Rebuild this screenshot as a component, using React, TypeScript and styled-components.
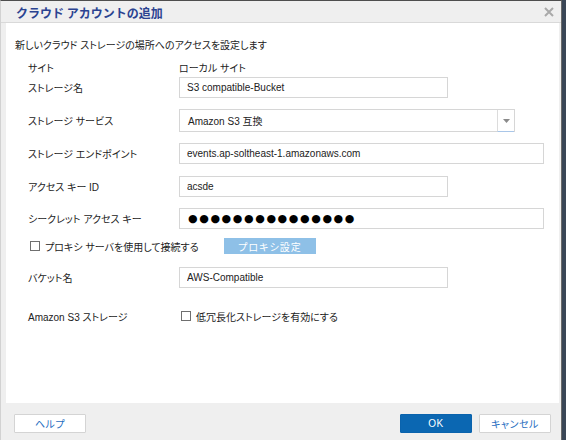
import React from "react";
import styled, { createGlobalStyle } from "styled-components";

const GlobalStyle = createGlobalStyle`
    html, body {
        margin: 0;
        padding: 0;
        background: #3a4656;
    }
    body {
        font-family: "Liberation Sans", "Noto Sans CJK JP", sans-serif;
        font-feature-settings: "palt" 1;
        font-size: 10px;
        color: #222;
    }
`;

const DialogDiv = styled.div`
    width: 562px;
    height: 440px;
    box-sizing: border-box;
    background: #efefef;
    border-top: 1px solid #4e4e4e;
    border-left: 1px solid #d2d2d2;
    border-right: 1px solid #6a6a6a;
    display: flex;
    flex-direction: column;
`;

const HeaderDiv = styled.div`
    height: 21px;
    border-bottom: 1px solid #d9d9d9;
    display: flex;
    align-items: center;
    justify-content: space-between;
    padding: 0 7px 0 15px;
`;

const TitleSpan = styled.span`
    font-family: "Noto Sans CJK JP", sans-serif;
    font-feature-settings: normal;
    font-weight: bold;
    font-size: 12px;
    color: #2b4391;
    padding-top: 1px;
`;

const CloseBtn = styled.div`
    width: 10px;
    height: 10px;
    display: flex;
    margin-top: 1px;
`;

const ContentDiv = styled.div`
    flex: 1;
    background: #fff;
    margin: 0 2px 0 5px;
    display: flex;
    flex-direction: column;
`;

const DescDiv = styled.div`
    margin-top: 16px;
    padding-left: 9px;
    height: 14px;
    line-height: 14px;
`;

const RowDiv = styled.div<{ $top: number; $h: number }>`
    margin-top: ${(p) => p.$top}px;
    height: ${(p) => p.$h}px;
    padding-left: 22px;
    display: flex;
    align-items: center;
`;

const LabelSpan = styled.span`
    width: 151px;
    flex-shrink: 0;
`;

const TextInput = styled.input<{ $w: number }>`
    width: ${(p) => p.$w}px;
    height: 100%;
    box-sizing: border-box;
    border: 1px solid #d6d6d6;
    padding: 0 0 0 7px;
    margin: 0;
    font-family: "Liberation Sans", "Noto Sans CJK JP", sans-serif;
    font-size: 10px;
    color: #222;
    background: #fff;
    outline: none;
`;

const SecretBox = styled.div<{ $w: number }>`
    width: ${(p) => p.$w}px;
    height: 100%;
    box-sizing: border-box;
    border: 1px solid #d6d6d6;
    padding-left: 8px;
    display: flex;
    align-items: center;
    font-family: "DejaVu Sans", sans-serif;
    font-size: 11px;
    letter-spacing: 1.6px;
    color: #000;
`;

const SelectBox = styled.div<{ $w: number }>`
    width: ${(p) => p.$w}px;
    height: 100%;
    box-sizing: border-box;
    border: 1px solid #d6d6d6;
    display: flex;
    align-items: stretch;
`;

const SelectValue = styled.div`
    flex: 1;
    display: flex;
    align-items: center;
    padding-left: 8px;
`;

const SelectArrow = styled.div`
    width: 16px;
    border-left: 1px solid #dcdcdc;
    border-bottom: 1px solid #a9c6e8;
    margin-bottom: -1px;
    display: flex;
    align-items: center;
    justify-content: center;
`;

const CheckGroup = styled.label<{ $w?: number }>`
    display: flex;
    align-items: center;
    gap: 5px;
    ${(p) => (p.$w ? `width: ${p.$w}px;` : "")}
    flex-shrink: 0;
`;

const CheckBox = styled.span<{ $ml: number }>`
    width: 10px;
    height: 10px;
    box-sizing: border-box;
    border: 1px solid #6f6f6f;
    background: #fff;
    margin-left: ${(p) => p.$ml}px;
    display: inline-block;
`;

const ProxyBtn = styled.div`
    width: 92px;
    height: 16px;
    background: #8ec0e7;
    color: #fff;
    display: flex;
    align-items: center;
    justify-content: center;
    letter-spacing: 1px;
    margin-left: -4px;
`;

const FooterDiv = styled.div`
    height: 37px;
    box-sizing: border-box;
    padding: 11px 10px 0 13px;
    display: flex;
    align-items: flex-start;
    gap: 7px;
`;

const FooterBtn = styled.div<{ $primary?: boolean }>`
    width: 72px;
    height: 19px;
    box-sizing: border-box;
    border: 1px solid ${(p) => (p.$primary ? "#0a63ad" : "#d4d4d4")};
    background: ${(p) => (p.$primary ? "#0b67b2" : "#fff")};
    color: ${(p) => (p.$primary ? "#fff" : "#1e6dbf")};
    border-radius: 1px;
    display: flex;
    align-items: center;
    justify-content: center;
    font-size: 10px;
    letter-spacing: 0.5px;
`;

const Spacer = styled.div`
    flex: 1;
`;

const App = () => {
    return (
        <>
            <GlobalStyle />
            <DialogDiv>
                <HeaderDiv>
                    <TitleSpan>クラウド アカウントの追加</TitleSpan>
                    <CloseBtn>
                        <svg width="10" height="10" viewBox="0 0 10 10">
                            <path d="M1 1 L9 9 M9 1 L1 9" stroke="#a9a9a9" strokeWidth="2" />
                        </svg>
                    </CloseBtn>
                </HeaderDiv>

                <ContentDiv>
                    <DescDiv>新しいクラウド ストレージの場所へのアクセスを設定します</DescDiv>

                    <RowDiv $top={7} $h={14}>
                        <LabelSpan>サイト</LabelSpan>
                        <span>ローカル サイト</span>
                    </RowDiv>

                    <RowDiv $top={3} $h={21}>
                        <LabelSpan>ストレージ名</LabelSpan>
                        <TextInput $w={269} readOnly value="S3 compatible-Bucket" />
                    </RowDiv>

                    <RowDiv $top={11} $h={23}>
                        <LabelSpan>ストレージ サービス</LabelSpan>
                        <SelectBox $w={336}>
                            <SelectValue>Amazon S3 互換</SelectValue>
                            <SelectArrow>
                                <svg width="7" height="4" viewBox="0 0 7 4">
                                    <path d="M0 0 L7 0 L3.5 4 Z" fill="#8a8a8a" />
                                </svg>
                            </SelectArrow>
                        </SelectBox>
                    </RowDiv>

                    <RowDiv $top={11} $h={21}>
                        <LabelSpan>ストレージ エンドポイント</LabelSpan>
                        <TextInput $w={365} readOnly value="events.ap-soltheast-1.amazonaws.com" />
                    </RowDiv>

                    <RowDiv $top={12} $h={21}>
                        <LabelSpan>アクセス キー ID</LabelSpan>
                        <TextInput $w={269} readOnly value="acsde" />
                    </RowDiv>

                    <RowDiv $top={11} $h={21}>
                        <LabelSpan>シークレット アクセス キー</LabelSpan>
                        <SecretBox $w={365}>●●●●●●●●●●●●●●●</SecretBox>
                    </RowDiv>

                    <RowDiv $top={9} $h={16}>
                        <CheckGroup $w={200}>
                            <CheckBox $ml={2} />
                            <span>プロキシ サーバを使用して接続する</span>
                        </CheckGroup>
                        <ProxyBtn>プロキシ設定</ProxyBtn>
                    </RowDiv>

                    <RowDiv $top={13} $h={21}>
                        <LabelSpan>バケット名</LabelSpan>
                        <TextInput $w={269} readOnly value="AWS-Compatible" />
                    </RowDiv>

                    <RowDiv $top={21} $h={14}>
                        <LabelSpan>Amazon S3 ストレージ</LabelSpan>
                        <CheckGroup>
                            <CheckBox $ml={2} />
                            <span>低冗長化ストレージを有効にする</span>
                        </CheckGroup>
                    </RowDiv>
                </ContentDiv>

                <FooterDiv>
                    <FooterBtn>ヘルプ</FooterBtn>
                    <Spacer />
                    <FooterBtn $primary>OK</FooterBtn>
                    <FooterBtn>キャンセル</FooterBtn>
                </FooterDiv>
            </DialogDiv>
        </>
    );
};

export default App;
